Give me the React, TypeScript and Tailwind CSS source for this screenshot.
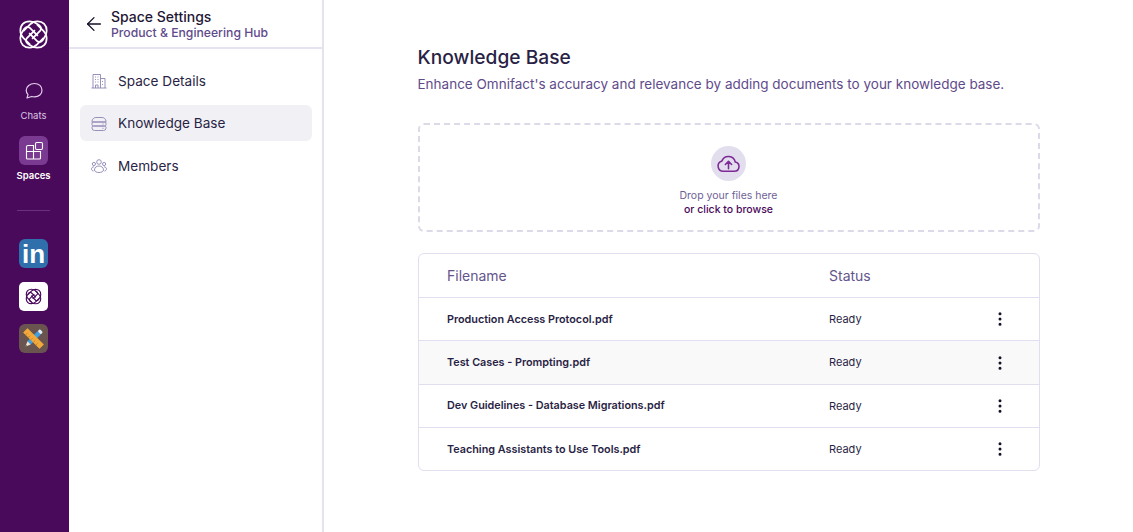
import { ArrowLeft, MoreVertical } from "lucide-react";

const files = [
  "Production Access Protocol.pdf",
  "Test Cases - Prompting.pdf",
  "Dev Guidelines - Database Migrations.pdf",
  "Teaching Assistants to Use Tools.pdf",
];

const strand = "M5.500 12.500 L12.500 5.500 C16.500 1.500 23.500 1.500 27 5 C30.500 8.500 30.500 15.500 27 19.500 C25 23.500 22.500 25 20 23 L11.500 14.500";

const Knot = ({ className, color, width }: { className: string; color: string; width: number }) => (
  <svg viewBox="0 0 32 32" fill="none" stroke={color} strokeWidth={width} className={className}>
    <path d={strand} />
    <path d={strand} transform="rotate(90 16 16)" />
    <path d={strand} transform="rotate(180 16 16)" />
    <path d={strand} transform="rotate(270 16 16)" />
  </svg>
);

const ChatIcon = () => (
  <svg viewBox="0 0 20 20" fill="none" stroke="#e3cdea" strokeWidth="1.200" strokeLinejoin="round" className="w-[20px] h-[20px]">
    <path d="M10.500 2.500c4.400 0 7.500 2.900 7.500 6.700s-3.100 6.700-7.500 6.700c-1 0-2-.15-2.900-.45L3 17l1-3.400C2.800 12.400 2.200 10.900 2.200 9.200 2.200 5.400 6 2.500 10.500 2.500z" />
  </svg>
);

const SpacesIcon = () => (
  <svg viewBox="0 0 20 20" fill="none" stroke="white" strokeWidth="1.100" className="w-[20px] h-[20px]">
    <path d="M2.500 10.500V6a1.500 1.500 0 0 1 1.500-1.500h5.500v6M2.500 10.500h7M2.500 10.500V17a1 1 0 0 0 1 1h6v-7.500M9.500 18h6a1 1 0 0 0 1-1v-6.500h-7" />
    <rect x="11.500" y="1.500" width="7" height="7" rx="1.200" />
  </svg>
);

const ToolsIcon = () => (
  <svg viewBox="0 0 28 28" className="w-[25px] h-[25px]">
    <g transform="rotate(45 14 14)">
      <rect x="11.500" y="5" width="5" height="16" fill="#3f9fe0" />
      <rect x="11.500" y="1.500" width="5" height="3.500" rx="1.200" fill="#e4ecf4" />
      <path d="M11.500 21h5L14 27z" fill="#efe6d6" />
      <path d="M13.200 25h1.600L14 27z" fill="#333" />
    </g>
    <g transform="rotate(-45 14 14)">
      <rect x="10.500" y="1" width="7" height="26" rx="0.500" fill="#f2a93b" />
      <path d="M10.500 5h3M10.500 9h3M10.500 13h3M10.500 17h3M10.500 21h3" stroke="#b57a1e" strokeWidth="0.800" />
    </g>
  </svg>
);

const BuildingIcon = () => (
  <svg viewBox="0 0 16 16" fill="none" stroke="#8f84b3" strokeWidth="0.900" className="w-[16px] h-[16px] shrink-0">
    <path d="M0.500 15h15M2 15V1.500h7.500V15M9.500 5.500h4.500V15" />
    <path d="M4 4h1M6.500 4h1M4 6.500h1M6.500 6.500h1M4 9h1M6.500 9h1M4.500 15v-3h2.500v3M11.500 8v1M11.500 11v1" />
  </svg>
);

const StackIcon = () => (
  <svg viewBox="0 0 16 16" fill="none" stroke="#8f84b3" strokeWidth="0.900" className="w-[16px] h-[16px] shrink-0">
    <path d="M1 5.500C1 3 3 1.500 5 1.500h6c2 0 4 1.500 4 4v.5H1z" />
    <path d="M2 6h12a1 1 0 0 1 1 1v1.500a1.500 1.500 0 0 1-1.500 1.500h-11A1.500 1.500 0 0 1 1 8.500V7a1 1 0 0 1 1-1z" />
    <path d="M2.500 10h11a1.500 1.500 0 0 1 1.500 1.500V12a2.500 2.500 0 0 1-2.500 2.500h-9A2.500 2.500 0 0 1 1 12v-.5A1.500 1.500 0 0 1 2.500 10z" />
    <path d="M11.500 8h1M11.500 12.300h1" />
  </svg>
);

const GroupIcon = () => (
  <svg viewBox="0 0 16 16" fill="none" stroke="#8f84b3" strokeWidth="0.900" className="w-[16px] h-[16px] shrink-0">
    <circle cx="8" cy="4" r="2.300" />
    <circle cx="2.900" cy="6" r="1.600" />
    <circle cx="13.100" cy="6" r="1.600" />
    <path d="M3.500 12c0-2.500 2-4 4.500-4s4.500 1.500 4.500 4c0 1.500-2 2.500-4.500 2.500S3.500 13.500 3.500 12z" />
    <path d="M2.500 13C1.200 12.800.5 12 .5 11c0-1.200 1-2.200 2.600-2.200M13.500 13c1.300-.2 2-1 2-2 0-1.200-1-2.200-2.600-2.200" />
  </svg>
);

const UploadIcon = () => (
  <svg viewBox="0 0 24 24" fill="none" stroke="#7e2a96" strokeWidth="1.500" strokeLinecap="round" strokeLinejoin="round" className="w-[25px] h-[25px]">
    <path d="M7 19.500h10.500a4.500 4.500 0 0 0 1-8.900 6.700 6.700 0 0 0-12.800-1.100A5.100 5.100 0 0 0 7 19.500z" />
    <path d="M12 17v-6.500M9 13l3-3 3 3" />
  </svg>
);

export default function App() {
  return (
    <div className="flex h-[532px] bg-white font-['Inter',sans-serif] text-[#2a1f45] overflow-hidden">
      {/* main nav */}
      <aside className="w-[69px] shrink-0 bg-[#4a0a5c] flex flex-col items-center pt-[19px] pr-[2px]">
        <Knot className="w-[31px] h-[31px]" color="white" width={1.800} />
        <div className="mt-[31px]">
          <ChatIcon />
        </div>
        <span className="text-[9.500px] leading-[12px] mt-[9px] text-[#dcc5e4]">Chats</span>
        <div className="w-[29px] h-[29px] mt-[14px] rounded-[6px] bg-[#7b3a91] flex items-center justify-center">
          <SpacesIcon />
        </div>
        <span className="text-[9.500px] leading-[12px] mt-[5px] font-semibold text-white">Spaces</span>
        <div className="w-[33px] h-px mt-[28px] bg-[#6a2f7e]" />
        <div className="w-[29px] h-[29px] mt-[28px] rounded-[6px] bg-[#2f6fab] flex items-center justify-center text-white font-bold text-[26px] leading-none font-['Liberation_Sans',sans-serif]">
          in
        </div>
        <div className="w-[29px] h-[29px] mt-[14px] rounded-[5px] bg-white flex items-center justify-center">
          <Knot className="w-[17px] h-[17px]" color="#4a0a5c" width={2.200} />
        </div>
        <div className="w-[29px] h-[29px] mt-[13px] rounded-[6px] bg-[#6a5450] flex items-center justify-center">
          <ToolsIcon />
        </div>
      </aside>

      {/* settings nav */}
      <aside className="w-[255px] shrink-0 border-r-2 border-[#e6e3f1]">
        <div className="h-[49px] border-b-2 border-[#e6e3f1] flex items-center pl-[14px] pt-[1px]">
          <ArrowLeft className="w-[22px] h-[22px] text-[#160f26]" strokeWidth={1.400} />
          <div className="ml-[6px]">
            <div className="text-[14px] leading-[16px] font-medium text-[#1f1735]">Space Settings</div>
            <div className="text-[12.200px] leading-[15px] font-medium text-[#5f4b8b]">Product &amp; Engineering Hub</div>
          </div>
        </div>
        <nav className="pl-[11px] pr-[10px] pt-[13px] flex flex-col gap-[6.500px]">
          <div className="h-[36px] px-[11px] pt-[2px] flex items-center gap-[11px] rounded-[6px]">
            <BuildingIcon />
            <span className="text-[13.600px] text-[#2a1f45]">Space Details</span>
          </div>
          <div className="h-[36px] px-[11px] pt-[2px] flex items-center gap-[11px] rounded-[6px] bg-[#f1f1f5]">
            <StackIcon />
            <span className="text-[13.600px] text-[#2a1f45]">Knowledge Base</span>
          </div>
          <div className="h-[36px] px-[11px] pt-[2px] flex items-center gap-[11px] rounded-[6px]">
            <GroupIcon />
            <span className="text-[13.600px] text-[#2a1f45]">Members</span>
          </div>
        </nav>
      </aside>

      {/* content */}
      <main className="flex-1 flex justify-center pt-[44px]">
        <div className="w-[622px]">
          <h1 className="text-[19.200px] leading-[26px] font-medium text-[#2a1f45]">Knowledge Base</h1>
          <p className="mt-[2px] text-[13.500px] leading-[24px] text-[#5f4b8b]">
            Enhance Omnifact's accuracy and relevance by adding documents to your knowledge base.
          </p>

          <div className="mt-[27px] h-[109px] rounded-[6px] border-2 border-dashed border-[#dcdae8] flex flex-col items-center pt-[21px]">
            <div className="w-[35px] h-[35px] rounded-full bg-[#e2deed] flex items-center justify-center">
              <UploadIcon />
            </div>
            <div className="mt-[8px] text-[10.500px] leading-[14px] text-[#6f5f96]">Drop your files here</div>
            <div className="text-[10.500px] leading-[14px] font-medium text-[#4a0a5c]">or click to browse</div>
          </div>

          <div className="mt-[21px] rounded-[6px] border border-[#e1deef] overflow-hidden">
            <div className="h-[43px] flex items-center text-[14px] text-[#64558c]">
              <span className="w-[410.500px] pl-[28.500px]">Filename</span>
              <span>Status</span>
            </div>
            {files.map((name, i) => (
              <div
                key={name}
                className={`h-[43.350px] border-t border-[#e1deef] flex items-center text-[11px] ${i === 1 ? "bg-[#f9f9fa]" : ""}`}
              >
                <span className="w-[410.500px] pl-[28.500px] pt-[1px] text-[10.800px] font-semibold text-[#2a1f45]">{name}</span>
                <span className="flex-1 text-[#2a1f45]">Ready</span>
                <MoreVertical className="w-[18px] h-[18px] mr-[29.500px] text-[#160f26]" strokeWidth={2} />
              </div>
            ))}
          </div>
        </div>
      </main>
    </div>
  );
}
